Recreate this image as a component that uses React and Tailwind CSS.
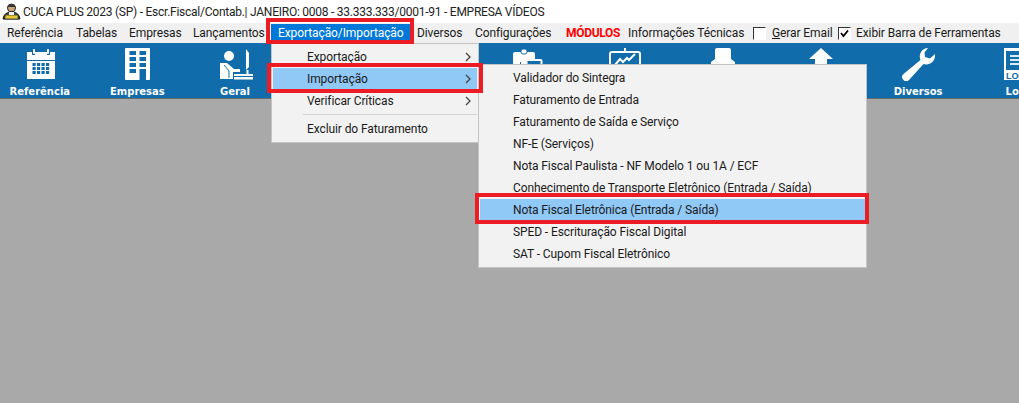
const menuItems = [
  { label: "Referência", w: "w-[69px]" },
  { label: "Tabelas", w: "w-[53px]" },
  { label: "Empresas", w: "w-[64px]" },
  { label: "Lançamentos", w: "w-[85px]" },
];

const exportItems = ["Exportação", "Importação", "Verificar Críticas"];

const importItems = [
  "Validador do Sintegra",
  "Faturamento de Entrada",
  "Faturamento de Saída e Serviço",
  "NF-E (Serviços)",
  "Nota Fiscal Paulista - NF Modelo 1 ou 1A / ECF",
  "Conhecimento de Transporte Eletrônico (Entrada / Saída)",
  "Nota Fiscal Eletrônica (Entrada / Saída)",
  "SPED - Escrituração Fiscal Digital",
  "SAT - Cupom Fiscal Eletrônico",
];

function Logo() {
  return (
    <svg width="19" height="17" viewBox="0 0 19 17" className="shrink-0">
      <circle cx="9.5" cy="5" r="4" fill="#c9a77a" stroke="#222" />
      <path d="M5 4 Q9.5 -1 14 4 Z" fill="#333" />
      <path d="M1 16 Q2 9 9.5 9 Q17 9 18 16 Z" fill="#4a5a3a" stroke="#111" />
      <rect x="3" y="12" width="13" height="4" fill="#e8c838" stroke="#222" strokeWidth="0.7" />
      <rect x="7" y="9" width="5" height="3" fill="#eee" />
    </svg>
  );
}

function CalendarIcon() {
  return (
    <svg width="30" height="31" viewBox="0 0 30 31" fill="#fff" className="ml-[2px]">
      <path d="M1 4h5v3h3V4h12v3h3V4h5v8H1z" />
      <rect x="7" y="1" width="2" height="5" rx="1" />
      <rect x="21" y="1" width="2" height="5" rx="1" />
      <path d="M1 13h28v18H1z" />
      <g fill="#106cab">
        {[6.5, 11, 15.5, 20].map((x) =>
          [15, 19, 23].map((y) => <rect key={`${x}-${y}`} x={x} y={y} width="3.2" height="3" />)
        )}
      </g>
    </svg>
  );
}

function BuildingIcon() {
  return (
    <svg width="25" height="32" viewBox="0 0 25 32">
      <rect width="25" height="32" rx="1" fill="#fff" />
      <g fill="#106cab">
        {[3, 9, 15, 21].map((y) => (
          <rect key={y} x="4.5" y={y} width="6.5" height="4" />
        ))}
        {[3, 9, 15].map((y) => (
          <rect key={y} x="14.5" y={y} width="6.5" height="4" />
        ))}
        <rect x="14.5" y="21" width="6.5" height="11" />
      </g>
    </svg>
  );
}

function DeskIcon() {
  return (
    <svg width="33" height="32" viewBox="0 0 33 32" fill="#fff" className="ml-[3px]">
      <circle cx="9" cy="8" r="5" />
      <path d="M0 15h7l7 6h6v3h-7v7H0z" />
      <path d="M4 17l5 6v7" stroke="#106cab" fill="none" />
      <path d="M26 1l3 4v14l-3 3z" />
      <rect x="26.5" y="22" width="2" height="4" />
      <rect x="14" y="26" width="19" height="2" />
      <rect x="14" y="29" width="19" height="2.5" />
    </svg>
  );
}

function ClipboardIcon() {
  return (
    <svg width="30" height="32" viewBox="0 0 30 32" fill="#fff">
      <rect x="0" y="4" width="22" height="24" rx="2" />
      <rect x="8" y="1" width="6" height="5" rx="2" stroke="#106cab" />
      <path d="M4 20v-3h1v3zM7 20v-6h1v6zM10 20v-4h1v4z" fill="#106cab" />
      <rect x="13.5" y="12" width="15" height="13" rx="1" stroke="#fff" strokeWidth="2" fill="#106cab" />
    </svg>
  );
}

function ChartIcon() {
  return (
    <svg width="32" height="30" viewBox="0 0 32 30" fill="none">
      <rect x="1" y="4" width="30" height="24" rx="2" stroke="#fff" strokeWidth="2" />
      <rect x="15" y="0" width="2" height="4" fill="#fff" />
      <path d="M6 17l5-6 3 3 4-4 2 2 6-6" stroke="#fff" strokeWidth="2" />
    </svg>
  );
}

function StampIcon() {
  return (
    <svg width="24" height="16" viewBox="0 0 24 16" fill="#fff">
      <path d="M4 2q0-2 2-2h12q2 0 2 2v9l4 3v2H0v-2l4-3z" />
    </svg>
  );
}

function ArrowIcon() {
  return (
    <svg width="24" height="16" viewBox="0 0 24 16" fill="#fff">
      <path d="M12 0l12 11h-6v5H6v-5H0z" />
    </svg>
  );
}

function WrenchIcon() {
  return (
    <svg width="33" height="33" viewBox="0 0 33 33" fill="#fff">
      <path d="M26 0a8.5 8.5 0 0 0-7.5 12L1.5 26a4 4 0 0 0 5.5 6L21.500 16A9 9 0 0 0 33 6l-5 4.500-5-1.500-.5-4.500z" />
    </svg>
  );
}

function LogIcon() {
  return (
    <svg width="30" height="32" viewBox="0 0 30 32" className="ml-[6px]">
      <rect width="30" height="32" fill="#fff" />
      <rect x="2" y="3" width="26" height="19" fill="#106cab" />
      <path d="M6 8h20M6 12h20M6 16h20" stroke="#dbe9f4" strokeWidth="2" />
      <text x="2" y="30.500" fontSize="9" fontWeight="700" fill="#106cab" fontFamily="Liberation Sans, sans-serif">LOG</text>
    </svg>
  );
}

const tools = [
  { label: "Referência", icon: <CalendarIcon /> },
  { label: "Empresas", icon: <BuildingIcon /> },
  { label: "Geral", icon: <DeskIcon /> },
  { label: "", icon: null },
  { label: "", icon: null },
  { label: "", icon: <ClipboardIcon /> },
  { label: "", icon: <ChartIcon /> },
  { label: "", icon: <StampIcon /> },
  { label: "", icon: <ArrowIcon /> },
  { label: "Diversos", icon: <WrenchIcon /> },
  { label: "Log", icon: <LogIcon /> },
];

function Checkbox({ checked }) {
  return (
    <span className="w-[13px] h-[13px] shrink-0 bg-white border border-[#333] border-r-white border-b-white flex items-center justify-center">
      {checked && (
        <svg width="9" height="9" viewBox="0 0 9 9" fill="none">
          <path d="M1 4l2.500 3L8 1.500" stroke="#000" strokeWidth="1.800" />
        </svg>
      )}
    </span>
  );
}

function Chevron() {
  return (
    <svg width="6" height="10" viewBox="0 0 6 10" fill="none" className="mr-[5px]">
      <path d="M1 1l4 4-4 4" stroke="#444" strokeWidth="1.300" />
    </svg>
  );
}

export default function App() {
  return (
    <div className="relative w-[1019px] h-[403px] overflow-hidden flex flex-col bg-[#a9a9a9] font-['Roboto',sans-serif] text-[12px] text-[#1a1a1a] tracking-[-0.1px]">
      {/* Title bar */}
      <div className="h-[23px] bg-white flex items-center gap-[2px] pl-[2px] text-[#222] tracking-[-0.25px]">
        <Logo />
        <span>CUCA PLUS 2023 (SP) - Escr.Fiscal/Contab.| JANEIRO: 0008 - 33.333.333/0001-91 - EMPRESA VÍDEOS</span>
      </div>

      {/* Menu bar */}
      <div className="h-[20px] bg-[#f0f0f0] flex items-center whitespace-nowrap">
        {menuItems.map((m) => (
          <span key={m.label} className={`${m.w} pl-[7px]`}>
            {m.label}
          </span>
        ))}
        <span className="w-[139px] h-[18px] pl-[7px] flex items-center bg-[#0078d7] text-white">
          Exportação/Importação
        </span>
        <span className="w-[58px] pl-[7px]">Diversos</span>
        <span className="w-[91px] pl-[7px]">Configurações</span>
        <span className="w-[63px] pl-[7px] font-bold text-[#ff0000] tracking-[-0.3px]">MÓDULOS</span>
        <span className="w-[131px] pl-[6px]">Informações Técnicas</span>
        <Checkbox />
        <span className="w-[72px] pl-[6px]">
          <span className="underline">G</span>erar Email
        </span>
        <Checkbox checked />
        <span className="pl-[5px]">Exibir Barra de Ferramentas</span>
      </div>

      {/* Toolbar */}
      <div className="h-[56px] bg-[#106cab] border-b border-[#6b6b6b] overflow-hidden">
        <div className="flex ml-[-9px]">
          {tools.map((t, i) => (
            <div key={i} className="w-[97.6px] shrink-0 flex flex-col items-center">
              <div className="h-[42px] flex items-start justify-center pt-[5px]">{t.icon}</div>
              <span className="text-white font-bold text-[10px] leading-[13px] tracking-normal font-['DejaVu_Sans',sans-serif]">
                {t.label}
              </span>
            </div>
          ))}
        </div>
      </div>

      <div className="flex-1 bg-[#a9a9a9]" />

      {/* Exportação/Importação dropdown */}
      <div className="absolute left-[271px] top-[43px] w-[208px] h-[100px] bg-[#f2f2f2] border border-[#c4c4c4] pt-[2px] flex flex-col">
        {exportItems.map((label, i) => (
          <div
            key={label}
            className={`h-[22px] mx-[1px] flex items-center justify-between pl-[34px] pr-[1px] ${
              i === 1 ? "bg-[#90c8f6]" : ""
            }`}
          >
            <span>{label}</span>
            <Chevron />
          </div>
        ))}
        <div className="h-px bg-[#d4d4d4] ml-[31px] mr-[1px] mt-[2px] mb-[3px]" />
        <div className="h-[22px] pl-[35px] flex items-center">Excluir do Faturamento</div>
      </div>

      {/* Importação submenu */}
      <div className="absolute left-[478px] top-[64px] w-[389px] h-[204px] bg-[#f2f2f2] border border-[#c4c4c4] pt-[2px] flex flex-col">
        {importItems.map((label, i) => (
          <div
            key={label}
            className={`h-[22px] flex items-center ${i === 6 ? "mx-[1px] pl-[33px] bg-[#90c8f6]" : "pl-[34px]"}`}
          >
            {label}
          </div>
        ))}
      </div>

      {/* Red annotation boxes */}
      <div className="absolute left-[266px] top-[18px] w-[148px] h-[26px] border-[4px] border-[#ed1c24]" />
      <div className="absolute left-[267px] top-[63px] w-[216px] h-[30px] border-[4px] border-[#ed1c24]" />
      <div className="absolute left-[475px] top-[193px] w-[394px] h-[31px] border-[4px] border-[#ed1c24]" />
    </div>
  );
}
